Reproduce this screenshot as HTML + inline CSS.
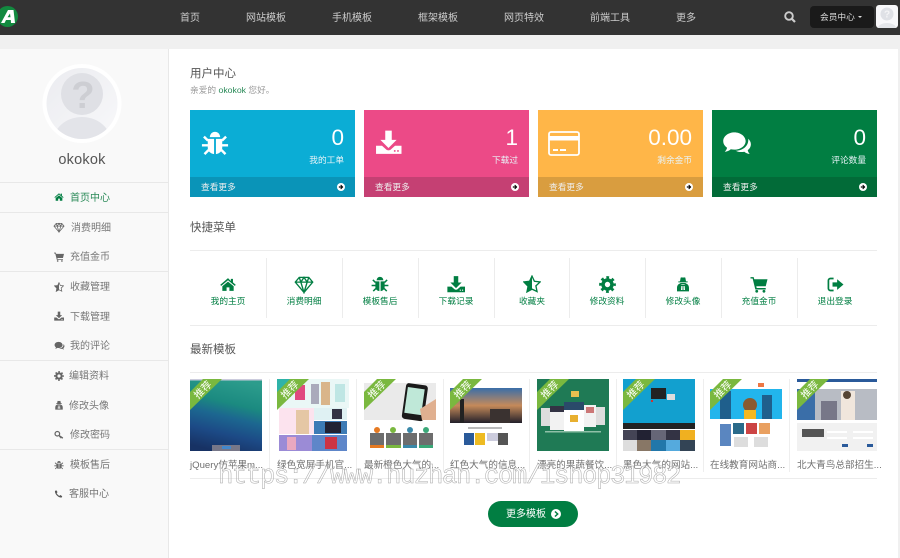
<!DOCTYPE html>
<html lang="zh"><head><meta charset="utf-8"><title>用户中心</title>
<style>
html,body{margin:0;padding:0;background:#f0f0f0}
body{width:900px;height:558px;overflow:hidden;position:relative;font-family:"Liberation Sans","Noto Sans CJK SC",sans-serif;color:#666}
#w{position:absolute;left:0;top:0;width:900px;height:558px;overflow:hidden;filter:blur(.3px)}
.a,.t,svg.i{position:absolute}
.t{white-space:nowrap;height:14px;line-height:14px;font-size:10px;margin-top:1px}
.nav{color:#ccc;top:11px}
.c{color:#fff;text-align:right}
.s{color:#777}
.q{color:#017e42;font-size:8.7px;width:60px;text-align:center;top:293px}
.m{color:#707070;font-size:9.6px;top:458px}
.l{background:#e8e8e8;position:absolute}
svg.i{fill:currentColor;overflow:visible}
.card{position:absolute;top:110px;height:87px}
.foot{position:absolute;left:0;right:0;bottom:0;height:20px}
.num{position:absolute;right:11px;top:15px;font-size:22.5px;line-height:26px;color:#fff}
.lab{position:absolute;right:11px;top:43px;font-size:8.7px;line-height:14px;color:#e8f4f8;white-space:nowrap}
.more{position:absolute;left:11px;top:3px;font-size:8.7px;line-height:14px;color:#eee}
.go{position:absolute;right:10px;top:6px;width:8px;height:8px}
.th{position:absolute;top:379px;height:72px}
</style></head><body><div id="w">
<svg width="0" height="0" style="position:absolute">
<symbol id="home" viewBox="0 0 24 24"><path d="M12 3 1 12.5 2.5 14 12 6l9.5 8 1.5-1.5-4-3.5V4h-3v3zM4 14.5V21h6v-5h4v5h6v-6.5L12 8z"/></symbol>
<symbol id="bug" viewBox="0 0 24 24"><path d="M7.5 7C8 3.5 10 2.500 12 2.500s4 1 4.500 4.500zM5.800 8.500h5.400v13C7.500 21 5.800 18.500 5.800 16zM18.200 8.500h-5.400v13c3.700-.5 5.400-3 5.400-5.500z"/><path d="M6 10 2.500 6.500M6 14H.8M6.500 18 3 21.500M18 10l3.500-3.500M18 14h5.200M17.500 18l3.500 3.500" fill="none" stroke="currentColor" stroke-width="2.100"/></symbol>
<symbol id="dia" viewBox="0 0 24 24"><path d="M6 3h12l5 6-11 13L1 9zM1 9h22M8 9l4 13 4-13M6 3l2 6 4-6 4 6 2-6" fill="none" stroke="currentColor" stroke-width="1.700"/></symbol>
<symbol id="dl" viewBox="0 0 24 24"><path fill-rule="evenodd" d="M9 1.500h6V10h4.500L12 17.500 4.500 10H9zM.5 15.500h5.500l4 3.500c1 .9 3 .9 4 0l4-3.500h6V23H.5zM17 19.500h1.500V21H17zM20 19.500h1.500V21H20z"/></symbol>
<symbol id="star" viewBox="0 0 24 24"><path d="M12 1.500l3.200 6.900 7.600.9-5.600 5.200 1.500 7.500L12 18.800 5.300 22.500l1.500-7.500-5.600-5.700 7.600-.9z" fill="none" stroke="currentColor" stroke-width="1.800"/><path d="M12 1.500v17.300l-6.700 3.700 1.500-7.500-5.600-5.700 7.600-.9z"/></symbol>
<symbol id="cog" viewBox="0 0 24 24"><circle cx="12" cy="12" r="6.300" fill="none" stroke="currentColor" stroke-width="5"/><circle cx="12" cy="12" r="10" fill="none" stroke="currentColor" stroke-width="3.600" stroke-dasharray="3.900 3.950" stroke-dashoffset="1.950"/></symbol>
<symbol id="sec" viewBox="0 0 24 24"><path fill-rule="evenodd" d="M7.500 8 8.500 2.500c1-1 2.500-.2 3.500-.2s2.500-.8 3.500.2l1 5.500h2.500v1.500H5V8zM3 23v-5c0-4 2-6 4.500-6.800C8.500 13 10 13.500 12 13.500s3.500-.5 4.500-2.300C19 12 21 14 21 18v5zM9.500 15l-.5 6h2.300v-6zM12.700 15v6H15l-.5-6z"/><path d="M7.500 10.500h9l-.8 2H8.300z"/></symbol>
<symbol id="cart" viewBox="0 0 24 24"><path d="M0 1.500h4.500l.8 3H24l-2.500 10H8.200l.5 2.500H21.500v2H6.800L3 3.500H0z"/><circle cx="8.800" cy="21.500" r="2"/><circle cx="19" cy="21.500" r="2"/></symbol>
<symbol id="out" viewBox="0 0 24 24"><path d="M10 3.500H5.500A2.800 2.800 0 0 0 2.700 6.300v11.400a2.800 2.800 0 0 0 2.800 2.800H10" fill="none" stroke="currentColor" stroke-width="2.400"/><path d="M8.500 9h6.500V4.500l9 7.500-9 7.500V15H8.500z"/></symbol>
<symbol id="com" viewBox="0 0 24 24"><path d="M9.800 2C4.400 2 .2 5.400.2 9.500c0 2.300 1.300 4.300 3.300 5.700-.3 1.300-1 2.500-2 3.500 2-.2 3.800-1 5.200-2.200 1 .2 2 .3 3.100.3 5.400 0 9.600-3.400 9.600-7.300S15.200 2 9.800 2z"/><path d="M21.600 7.500c1.500 1.300 2.300 3 2.300 4.800 0 2-1 3.700-2.700 5 .2 1.200.8 2.300 1.700 3.200-1.800-.1-3.400-.8-4.600-1.900-.9.2-1.800.3-2.700.3-1.800 0-3.500-.4-4.800-1.100 6.300-.1 11.500-4.200 10.800-10.300z"/></symbol>
<symbol id="key" viewBox="0 0 24 24"><path d="M13 12l9 6-1 3-3-2-1 2-2-2-3-3"/><circle cx="8" cy="9" r="5.500" fill="none" stroke="currentColor" stroke-width="3"/></symbol>
<symbol id="tel" viewBox="0 0 24 24"><path d="M6 2 2.500 4C2 12 11 22 20 21.500l2-3.500-5-3.500-2.500 2.500C12 16 8 12 7 9.500L9.500 7z"/></symbol>
<symbol id="go" viewBox="0 0 24 24"><circle cx="12" cy="12" r="12" fill="#fff"/><path d="M12 5 10 7l3 3H5.500v4H13l-3 3 2 2 7-7z"/></symbol>
<symbol id="chev" viewBox="0 0 24 24"><circle cx="12" cy="12" r="12" fill="#fff"/><path d="M9.500 6 16 12l-6.500 6" fill="none" stroke="currentColor" stroke-width="3.600"/></symbol>
</svg>

<!-- top bar -->
<div class="a" style="left:0;top:0;width:900px;height:35px;background:#333"></div>
<svg class="a" style="left:0;top:5px" width="20" height="23" viewBox="0 0 20 23"><circle cx="7.500" cy="11.500" r="10.500" fill="#12893f"/><path d="M1 18 8 5h5.500L15 18h-4l-.2-3H6l-1.500 3zM7.500 12.300h3L10 8.500z" fill="#fff" fill-rule="evenodd"/></svg>
<div class="t nav" style="left:180px">首页</div>
<div class="t nav" style="left:246px">网站模板</div>
<div class="t nav" style="left:332px">手机模板</div>
<div class="t nav" style="left:418px">框架模板</div>
<div class="t nav" style="left:504px">网页特效</div>
<div class="t nav" style="left:590px">前端工具</div>
<div class="t nav" style="left:676px">更多</div>
<svg class="a" style="left:784px;top:11px" width="12" height="12" viewBox="0 0 12 12"><circle cx="5" cy="5" r="3.800" fill="none" stroke="#ccc" stroke-width="1.900"/><path d="M8 8l3 3" stroke="#ccc" stroke-width="2.200"/></svg>
<div class="a" style="left:810px;top:6px;width:64px;height:22px;background:#1a1a1a;border-radius:4px"></div>
<div class="t" style="left:820px;top:9px;font-size:8.700px;color:#ddd">会员中心</div>
<div class="a" style="left:858px;top:16px;border:2.500px solid transparent;border-top-color:#ddd;border-bottom:0"></div>
<svg class="a" style="left:876px;top:5px" width="22" height="23" viewBox="0 0 22 23"><rect width="22" height="23" rx="3" fill="#f8f8fa"/><circle cx="11" cy="9" r="6.500" fill="#dfe1e6"/><text x="11" y="12.500" font-size="10" font-weight="bold" text-anchor="middle" fill="#f4f4f6">?</text><ellipse cx="11" cy="23" rx="9" ry="5" fill="#e4e6ea"/></svg>

<!-- panels -->
<div class="a" style="left:0;top:49px;width:168px;height:509px;background:#f9f9f9;border-right:1px solid #e8e8e8"></div>
<div class="a" style="left:169px;top:49px;width:729px;height:509px;background:#fff"></div>

<!-- avatar -->
<svg class="a" style="left:42px;top:64px" width="80" height="80" viewBox="0 0 80 80"><defs><clipPath id="cp"><circle cx="40" cy="39.500" r="35.500"/></clipPath><linearGradient id="ag" x1="0" y1="0" x2="1" y2="1"><stop offset="0" stop-color="#ebecf0"/><stop offset="1" stop-color="#f8f8fa"/></linearGradient></defs><circle cx="40" cy="39.500" r="39.500" fill="#fff"/><circle cx="40" cy="39.500" r="35.500" fill="url(#ag)"/><circle cx="40" cy="30" r="21" fill="#dfe0e5"/><text x="41" y="44" font-size="38" font-weight="bold" text-anchor="middle" fill="#cdced3" font-family="Liberation Sans">?</text><ellipse cx="40" cy="78" rx="29" ry="25" fill="#e3e4e9" clip-path="url(#cp)"/></svg>
<div class="a" style="left:0;top:151px;width:164px;text-align:center;font-size:14.500px;line-height:18px;color:#555;letter-spacing:.2px">okokok</div>

<!-- sidebar lines -->
<div class="l" style="left:0;top:182px;width:168px;height:1px"></div>
<div class="l" style="left:0;top:212px;width:168px;height:1px"></div>
<div class="l" style="left:0;top:271px;width:168px;height:1px"></div>
<div class="l" style="left:0;top:360px;width:168px;height:1px"></div>
<div class="l" style="left:0;top:449px;width:168px;height:1px"></div>

<!-- sidebar items -->
<svg class="i" style="left:54px;top:192px;color:#017e42" width="10" height="10"><use href="#home"/></svg><div class="t" style="left:70px;top:191px;color:#2a8a58">首页中心</div>
<svg class="i" style="left:53px;top:222px;color:#666" width="12" height="11"><use href="#dia"/></svg><div class="t s" style="left:71px;top:221px">消费明细</div>
<svg class="i" style="left:54px;top:252px;color:#666" width="10" height="10"><use href="#cart"/></svg><div class="t s" style="left:70px;top:250px">充值金币</div>
<svg class="i" style="left:54px;top:282px;color:#666" width="10" height="10"><use href="#star"/></svg><div class="t s" style="left:70px;top:280px">收藏管理</div>
<svg class="i" style="left:54px;top:311px;color:#666" width="10" height="10"><use href="#dl"/></svg><div class="t s" style="left:70px;top:310px">下载管理</div>
<svg class="i" style="left:54px;top:341px;color:#666" width="11" height="10"><use href="#com"/></svg><div class="t s" style="left:70px;top:339px">我的评论</div>
<svg class="i" style="left:54px;top:371px;color:#666" width="10" height="10"><use href="#cog"/></svg><div class="t s" style="left:69px;top:369px">编辑资料</div>
<svg class="i" style="left:54px;top:400px;color:#666" width="10" height="10"><use href="#sec"/></svg><div class="t s" style="left:69px;top:399px">修改头像</div>
<svg class="i" style="left:54px;top:430px;color:#666" width="10" height="10"><use href="#key"/></svg><div class="t s" style="left:70px;top:428px">修改密码</div>
<svg class="i" style="left:54px;top:460px;color:#666" width="10" height="10"><use href="#bug"/></svg><div class="t s" style="left:70px;top:458px">模板售后</div>
<svg class="i" style="left:54px;top:489px;color:#555" width="9" height="10"><use href="#tel"/></svg><div class="t s" style="left:69px;top:487px">客服中心</div>

<!-- header -->
<div class="t" style="left:190px;top:66px;font-size:11.500px;color:#555">用户中心</div>
<div class="t" style="left:190px;top:82px;font-size:8.700px;color:#999">亲爱的 <span style="color:#2a8a58">okokok</span> 您好。</div>

<!-- cards -->
<div class="card" style="left:190px;width:165px;background:#0badd5"><div class="num">0</div><div class="lab">我的工单</div><div class="foot" style="background:#0a94b8;color:#0a94b8"><div class="more">查看更多</div><svg class="go"><use href="#go" width="8" height="8"/></svg></div></div>
<div class="card" style="left:364px;width:165px;background:#ec4a87"><div class="num">1</div><div class="lab">下载过</div><div class="foot" style="background:#c54073;color:#c54073"><div class="more">查看更多</div><svg class="go"><use href="#go" width="8" height="8"/></svg></div></div>
<div class="card" style="left:538px;width:165px;background:#ffb648"><div class="num">0.00</div><div class="lab">剩余金币</div><div class="foot" style="background:#d99d3f;color:#d99d3f"><div class="more">查看更多</div><svg class="go"><use href="#go" width="8" height="8"/></svg></div></div>
<div class="card" style="left:712px;width:165px;background:#017e42"><div class="num">0</div><div class="lab">评论数量</div><div class="foot" style="background:#026b38;color:#026b38"><div class="more">查看更多</div><svg class="go"><use href="#go" width="8" height="8"/></svg></div></div>
<svg class="i" style="left:201px;top:129px;color:#fff" width="28" height="28"><use href="#bug"/></svg>
<svg class="i" style="left:375px;top:129px;color:#fff" width="27" height="26"><use href="#dl"/></svg>
<svg class="a" style="left:548px;top:131px" width="32" height="25" viewBox="0 0 32 25"><rect x="1" y="1" width="30" height="23" rx="2" fill="none" stroke="#fff" stroke-width="1.800"/><rect x="1" y="5" width="30" height="4.500" fill="#fff"/><rect x="5" y="18" width="5" height="2" fill="#fff"/><rect x="12" y="18" width="6" height="2" fill="#fff"/></svg>
<svg class="i" style="left:722px;top:130px;color:#fff" width="30" height="28"><use href="#com"/></svg>

<!-- quick menu -->
<div class="t" style="left:190px;top:220px;font-size:11.500px;color:#555">快捷菜单</div>
<div class="l" style="left:190px;top:250px;width:687px;height:1px;background:#ececec"></div>
<div class="l" style="left:190px;top:325px;width:687px;height:1px;background:#ececec"></div>
<div class="l" style="left:266px;top:258px;width:1px;height:60px;background:#ececec"></div>
<div class="l" style="left:342px;top:258px;width:1px;height:60px;background:#ececec"></div>
<div class="l" style="left:418px;top:258px;width:1px;height:60px;background:#ececec"></div>
<div class="l" style="left:494px;top:258px;width:1px;height:60px;background:#ececec"></div>
<div class="l" style="left:569px;top:258px;width:1px;height:60px;background:#ececec"></div>
<div class="l" style="left:645px;top:258px;width:1px;height:60px;background:#ececec"></div>
<div class="l" style="left:721px;top:258px;width:1px;height:60px;background:#ececec"></div>
<div class="l" style="left:797px;top:258px;width:1px;height:60px;background:#ececec"></div>

<svg class="i" style="left:219px;top:276px;color:#017e42" width="18" height="17"><use href="#home"/></svg><div class="t q" style="left:198px">我的主页</div>
<svg class="i" style="left:293px;top:275px;color:#017e42" width="22" height="19"><use href="#dia"/></svg><div class="t q" style="left:274px">消费明细</div>
<svg class="i" style="left:371px;top:275px;color:#017e42" width="18" height="18"><use href="#bug"/></svg><div class="t q" style="left:350px">模板售后</div>
<svg class="i" style="left:447px;top:275px;color:#017e42" width="18" height="18"><use href="#dl"/></svg><div class="t q" style="left:426px">下载记录</div>
<svg class="i" style="left:523px;top:275px;color:#017e42" width="18" height="18"><use href="#star"/></svg><div class="t q" style="left:502px">收藏夹</div>
<svg class="i" style="left:599px;top:276px;color:#017e42" width="17" height="17"><use href="#cog"/></svg><div class="t q" style="left:577px">修改资料</div>
<svg class="i" style="left:675px;top:275px;color:#017e42" width="16" height="18"><use href="#sec"/></svg><div class="t q" style="left:653px">修改头像</div>
<svg class="i" style="left:750px;top:276px;color:#017e42" width="18" height="17"><use href="#cart"/></svg><div class="t q" style="left:729px">充值金币</div>
<svg class="i" style="left:826px;top:276px;color:#017e42" width="18" height="17"><use href="#out"/></svg><div class="t q" style="left:805px">退出登录</div>

<!-- latest -->
<div class="t" style="left:190px;top:342px;font-size:11.500px;color:#555">最新模板</div>
<div class="l" style="left:190px;top:372px;width:687px;height:1px;background:#ececec"></div>
<div class="l" style="left:190px;top:478px;width:687px;height:1px;background:#ececec"></div>
<div class="l" style="left:269px;top:379px;width:1px;height:93px;background:#eee"></div>
<div class="l" style="left:356px;top:379px;width:1px;height:93px;background:#eee"></div>
<div class="l" style="left:443px;top:379px;width:1px;height:93px;background:#eee"></div>
<div class="l" style="left:529px;top:379px;width:1px;height:93px;background:#eee"></div>
<div class="l" style="left:616px;top:379px;width:1px;height:93px;background:#eee"></div>
<div class="l" style="left:703px;top:379px;width:1px;height:93px;background:#eee"></div>
<div class="l" style="left:789px;top:379px;width:1px;height:93px;background:#eee"></div>

<!-- thumb 1 -->
<svg class="th" style="left:190px" width="72" height="72" viewBox="0 0 72 72"><defs><linearGradient id="g1" x1=".62" y1="0" x2=".38" y2="1"><stop offset="0" stop-color="#2c9c8c"/><stop offset=".33" stop-color="#1b8a80"/><stop offset=".52" stop-color="#1c6790"/><stop offset=".75" stop-color="#1c4a86"/><stop offset="1" stop-color="#173264"/></linearGradient></defs><rect width="72" height="72" fill="url(#g1)"/><rect width="72" height="1.500" fill="#ccd"/><rect x="22" y="66" width="28" height="6" fill="#778"/><rect x="32" y="67" width="9" height="3" fill="#48c"/><polygon points="13,0 32,0 0,31 0,13" fill="#7ab83f"/><text x="13" y="14" transform="rotate(-45 13 11)" font-size="10" text-anchor="middle" fill="#fff">推荐</text></svg>
<!-- thumb 2 -->
<svg class="th" style="left:277px" width="72" height="72" viewBox="0 0 72 72"><rect width="72" height="72" fill="#fff"/><rect width="72" height="29" fill="#eaf7f6"/><rect width="14" height="18" fill="#2fb3a8"/><rect x="18" y="6" width="10" height="15" fill="#e04a80"/><rect x="44" y="3" width="9" height="23" fill="#d9b58a"/><rect x="34" y="5" width="8" height="20" fill="#aab"/><rect x="58" y="5" width="10" height="18" fill="#bfe6e4"/><rect x="2" y="29" width="35" height="26" fill="#fce3ee"/><rect x="19" y="31" width="13" height="24" fill="#e5c7a5"/><rect x="37" y="29" width="33" height="12" fill="#dff1f3"/><rect x="55" y="30" width="10" height="10" fill="#334"/><rect x="37" y="42" width="33" height="13" fill="#3d7bb5"/><rect x="48" y="43" width="16" height="11" fill="#223"/><rect x="2" y="56" width="33" height="16" fill="#9b8bd6"/><rect x="35" y="56" width="35" height="16" fill="#5e86c9"/><rect x="10" y="58" width="9" height="13" fill="#e9a8c0"/><rect x="48" y="58" width="12" height="12" fill="#c34"/><polygon points="13,0 32,0 0,31 0,13" fill="#7ab83f"/><text x="13" y="14" transform="rotate(-45 13 11)" font-size="10" text-anchor="middle" fill="#fff">推荐</text></svg>
<!-- thumb 3 -->
<svg class="th" style="left:364px" width="72" height="72" viewBox="0 0 72 72"><rect width="72" height="72" fill="#fff"/><rect y="4" width="72" height="37" fill="#eaeaea"/><rect x="40" y="5" width="22" height="36" rx="3" fill="#1a1a1a" transform="rotate(8 50 22)"/><rect x="42" y="9" width="17" height="26" fill="#bfe8d8" transform="rotate(8 50 22)"/><path d="M56 30l16-10v21H58z" fill="#e0b090"/><rect x="6" y="54" width="14" height="14" fill="#6d6d6d"/><rect x="22" y="54" width="15" height="14" fill="#6d6d6d"/><rect x="39" y="54" width="14" height="14" fill="#6d6d6d"/><rect x="55" y="54" width="14" height="14" fill="#6d6d6d"/><rect x="6" y="66" width="14" height="3" fill="#e67a22"/><rect x="22" y="66" width="15" height="3" fill="#7ab83f"/><rect x="39" y="66" width="14" height="3" fill="#3a88a8"/><rect x="55" y="66" width="14" height="3" fill="#3aa878"/><circle cx="13" cy="51" r="3" fill="#e67a22"/><circle cx="29" cy="51" r="3" fill="#7ab83f"/><circle cx="46" cy="51" r="3" fill="#3a88a8"/><circle cx="62" cy="51" r="3" fill="#3aa878"/><polygon points="13,0 32,0 0,31 0,13" fill="#7ab83f"/><text x="13" y="14" transform="rotate(-45 13 11)" font-size="10" text-anchor="middle" fill="#fff">推荐</text></svg>
<!-- thumb 4 -->
<svg class="th" style="left:450px" width="72" height="72" viewBox="0 0 72 72"><defs><linearGradient id="g4" x1="0" y1="0" x2="0" y2="1"><stop offset="0" stop-color="#3a6ea8"/><stop offset=".5" stop-color="#c58a5a"/><stop offset="1" stop-color="#22202a"/></linearGradient></defs><rect width="72" height="72" fill="#fff"/><rect y="9" width="72" height="35" fill="url(#g4)"/><rect x="10" y="20" width="4" height="24" fill="#222"/><rect x="40" y="30" width="20" height="14" fill="#3a3230"/><rect x="14" y="54" width="10" height="12" fill="#2a5a9a"/><rect x="25" y="54" width="10" height="12" fill="#eebb22"/><rect x="37" y="54" width="12" height="8" fill="#ccd"/><rect x="48" y="54" width="10" height="12" fill="#555"/><rect x="18" y="48" width="34" height="2" fill="#bbb"/><polygon points="13,0 32,0 0,31 0,13" fill="#7ab83f"/><text x="13" y="14" transform="rotate(-45 13 11)" font-size="10" text-anchor="middle" fill="#fff">推荐</text></svg>
<!-- thumb 5 -->
<svg class="th" style="left:537px" width="72" height="72" viewBox="0 0 72 72"><rect width="72" height="72" fill="#1f7a55"/><rect x="34" y="12" width="8" height="6" fill="#e8c050"/><rect x="27" y="23" width="20" height="30" fill="#fff"/><rect x="27" y="23" width="20" height="8" fill="#2a4a6a"/><rect x="13" y="27" width="14" height="24" fill="#f2f2f2"/><rect x="13" y="27" width="14" height="6" fill="#334"/><rect x="47" y="26" width="12" height="22" fill="#f2f2f2"/><rect x="49" y="28" width="8" height="6" fill="#c77"/><rect x="59" y="28" width="9" height="18" fill="#ddd"/><rect x="4" y="29" width="9" height="18" fill="#ddd"/><rect x="33" y="36" width="8" height="7" fill="#e8b030"/><rect x="8" y="52" width="56" height="1.500" fill="#8fc0a8"/><polygon points="13,0 32,0 0,31 0,13" fill="#7ab83f"/><text x="13" y="14" transform="rotate(-45 13 11)" font-size="10" text-anchor="middle" fill="#fff">推荐</text></svg>
<!-- thumb 6 -->
<svg class="th" style="left:623px" width="72" height="72" viewBox="0 0 72 72"><rect width="72" height="72" fill="#fff"/><rect width="72" height="44" fill="#12a0cf"/><rect y="44" width="72" height="6" fill="#222"/><rect x="28" y="9" width="15" height="11" fill="#222"/><rect x="44" y="15" width="8" height="6" fill="#ddd"/><rect x="28" y="21" width="2" height="2" fill="#c33"/><rect y="51" width="14" height="10" fill="#445"/><rect x="14" y="51" width="14" height="10" fill="#223"/><rect x="28" y="51" width="15" height="10" fill="#667"/><rect x="43" y="51" width="14" height="10" fill="#334"/><rect x="57" y="51" width="15" height="10" fill="#f0b020"/><rect y="61" width="14" height="11" fill="#ddd"/><rect x="14" y="61" width="14" height="11" fill="#876"/><rect x="28" y="61" width="15" height="11" fill="#27a"/><rect x="43" y="61" width="14" height="11" fill="#5ad"/><rect x="57" y="61" width="15" height="11" fill="#345"/><polygon points="13,0 32,0 0,31 0,13" fill="#7ab83f"/><text x="13" y="14" transform="rotate(-45 13 11)" font-size="10" text-anchor="middle" fill="#fff">推荐</text></svg>
<!-- thumb 7 -->
<svg class="th" style="left:710px" width="72" height="72" viewBox="0 0 72 72"><rect width="72" height="72" fill="#fff"/><rect y="10" width="72" height="30" fill="#22b5ec"/><rect x="10" y="12" width="11" height="28" fill="#1f5f8c"/><rect x="52" y="16" width="10" height="24" fill="#1f5f8c"/><circle cx="40" cy="26" r="7" fill="#8a5a30"/><rect x="34" y="31" width="12" height="9" fill="#f5b820"/><rect x="48" y="4" width="6" height="4" fill="#e74"/><rect x="10" y="45" width="11" height="22" fill="#5a86c0"/><rect x="23" y="44" width="11" height="11" fill="#2a6a8a"/><rect x="36" y="44" width="11" height="11" fill="#c44"/><rect x="49" y="44" width="11" height="11" fill="#e9a060"/><rect x="24" y="58" width="14" height="10" fill="#ddd"/><rect x="44" y="58" width="14" height="10" fill="#ddd"/><polygon points="13,0 32,0 0,31 0,13" fill="#7ab83f"/><text x="13" y="14" transform="rotate(-45 13 11)" font-size="10" text-anchor="middle" fill="#fff">推荐</text></svg>
<!-- thumb 8 -->
<svg class="th" style="left:797px" width="80" height="72" viewBox="0 0 80 72"><rect width="80" height="72" fill="#fff"/><rect width="80" height="3" fill="#2a5a9a"/><rect y="10" width="80" height="31" fill="#b8bcc4"/><rect width="18" height="31" y="10" fill="#3a6ea8"/><rect x="44" y="12" width="14" height="29" fill="#f0e6dc"/><circle cx="50" cy="16" r="4" fill="#543"/><rect x="24" y="22" width="16" height="19" fill="#778"/><rect y="44" width="80" height="28" fill="#f1f1f1"/><rect x="5" y="50" width="22" height="8" fill="#555"/><rect x="30" y="52" width="20" height="2" fill="#fff"/><rect x="56" y="52" width="20" height="2" fill="#fff"/><rect x="30" y="58" width="20" height="2" fill="#fff"/><rect x="56" y="58" width="20" height="2" fill="#fff"/><rect x="45" y="65" width="6" height="3" fill="#2a5a9a"/><rect x="70" y="65" width="6" height="3" fill="#2a5a9a"/><polygon points="13,0 32,0 0,31 0,13" fill="#7ab83f"/><text x="13" y="14" transform="rotate(-45 13 11)" font-size="10" text-anchor="middle" fill="#fff">推荐</text></svg>

<div class="t m" style="left:190px">jQuery仿苹果m...</div>
<div class="t m" style="left:277px">绿色宽屏手机官...</div>
<div class="t m" style="left:364px">最新橙色大气的...</div>
<div class="t m" style="left:450px">红色大气的信息...</div>
<div class="t m" style="left:537px">漂亮的果蔬餐饮...</div>
<div class="t m" style="left:623px">黑色大气的网站...</div>
<div class="t m" style="left:710px">在线教育网站商...</div>
<div class="t m" style="left:797px">北大青鸟总部招生...</div>

<!-- watermark -->
<div class="t" style="left:218px;top:462px;height:28px;line-height:28px;font-family:'Liberation Mono',monospace;font-size:25.500px;letter-spacing:-1.300px;color:rgba(255,255,255,.2);-webkit-text-stroke:.5px #a8a8a8">https://www.huzhan.com/ishop31982</div>

<!-- button -->
<div class="a" style="left:488px;top:501px;width:90px;height:26px;border-radius:13px;background:#017e42"></div>
<div class="t" style="left:506px;top:507px;color:#fff">更多模板</div>
<svg class="i" style="left:551px;top:509px;color:#017e42" width="10" height="10"><use href="#chev"/></svg>
</div></body></html>
